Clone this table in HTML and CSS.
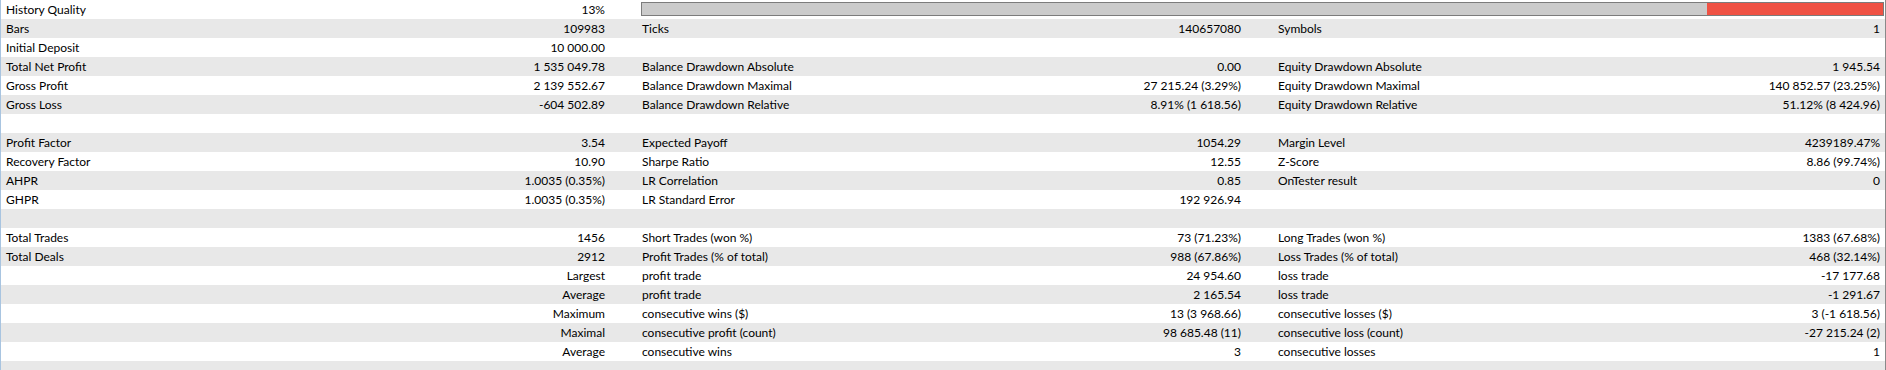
FILE: index.html
```html
<!DOCTYPE html>
<html>
<head>
<meta charset="utf-8">
<link rel="stylesheet" href="styles.css">
</head>
<body>
<div class="report">
  <div class="row">
    <div class="grp"><span class="lbl">History Quality</span><span class="val">13%</span></div>
    <div class="bar-cell"><div class="bar"><div class="bar-rest"></div><div class="bar-fill" style="width:14.2%"></div></div></div>
  </div>
  <div class="row">
    <div class="grp"><span class="lbl">Bars</span><span class="val">109983</span></div>
    <div class="grp"><span class="lbl">Ticks</span><span class="val">140657080</span></div>
    <div class="grp"><span class="lbl">Symbols</span><span class="val">1</span></div>
  </div>
  <div class="row">
    <div class="grp"><span class="lbl">Initial Deposit</span><span class="val">10 000.00</span></div>
    <div class="grp"></div>
    <div class="grp"></div>
  </div>
  <div class="row">
    <div class="grp"><span class="lbl">Total Net Profit</span><span class="val">1 535 049.78</span></div>
    <div class="grp"><span class="lbl">Balance Drawdown Absolute</span><span class="val">0.00</span></div>
    <div class="grp"><span class="lbl">Equity Drawdown Absolute</span><span class="val">1 945.54</span></div>
  </div>
  <div class="row">
    <div class="grp"><span class="lbl">Gross Profit</span><span class="val">2 139 552.67</span></div>
    <div class="grp"><span class="lbl">Balance Drawdown Maximal</span><span class="val">27 215.24 (3.29%)</span></div>
    <div class="grp"><span class="lbl">Equity Drawdown Maximal</span><span class="val">140 852.57 (23.25%)</span></div>
  </div>
  <div class="row">
    <div class="grp"><span class="lbl">Gross Loss</span><span class="val">-604 502.89</span></div>
    <div class="grp"><span class="lbl">Balance Drawdown Relative</span><span class="val">8.91% (1 618.56)</span></div>
    <div class="grp"><span class="lbl">Equity Drawdown Relative</span><span class="val">51.12% (8 424.96)</span></div>
  </div>
  <div class="row"></div>
  <div class="row">
    <div class="grp"><span class="lbl">Profit Factor</span><span class="val">3.54</span></div>
    <div class="grp"><span class="lbl">Expected Payoff</span><span class="val">1054.29</span></div>
    <div class="grp"><span class="lbl">Margin Level</span><span class="val">4239189.47%</span></div>
  </div>
  <div class="row">
    <div class="grp"><span class="lbl">Recovery Factor</span><span class="val">10.90</span></div>
    <div class="grp"><span class="lbl">Sharpe Ratio</span><span class="val">12.55</span></div>
    <div class="grp"><span class="lbl">Z-Score</span><span class="val">8.86 (99.74%)</span></div>
  </div>
  <div class="row">
    <div class="grp"><span class="lbl">AHPR</span><span class="val">1.0035 (0.35%)</span></div>
    <div class="grp"><span class="lbl">LR Correlation</span><span class="val">0.85</span></div>
    <div class="grp"><span class="lbl">OnTester result</span><span class="val">0</span></div>
  </div>
  <div class="row">
    <div class="grp"><span class="lbl">GHPR</span><span class="val">1.0035 (0.35%)</span></div>
    <div class="grp"><span class="lbl">LR Standard Error</span><span class="val">192 926.94</span></div>
    <div class="grp"></div>
  </div>
  <div class="row"></div>
  <div class="row">
    <div class="grp"><span class="lbl">Total Trades</span><span class="val">1456</span></div>
    <div class="grp"><span class="lbl">Short Trades (won %)</span><span class="val">73 (71.23%)</span></div>
    <div class="grp"><span class="lbl">Long Trades (won %)</span><span class="val">1383 (67.68%)</span></div>
  </div>
  <div class="row">
    <div class="grp"><span class="lbl">Total Deals</span><span class="val">2912</span></div>
    <div class="grp"><span class="lbl">Profit Trades (% of total)</span><span class="val">988 (67.86%)</span></div>
    <div class="grp"><span class="lbl">Loss Trades (% of total)</span><span class="val">468 (32.14%)</span></div>
  </div>
  <div class="row">
    <div class="grp"><span class="lbl"></span><span class="val">Largest</span></div>
    <div class="grp"><span class="lbl">profit trade</span><span class="val">24 954.60</span></div>
    <div class="grp"><span class="lbl">loss trade</span><span class="val">-17 177.68</span></div>
  </div>
  <div class="row">
    <div class="grp"><span class="lbl"></span><span class="val">Average</span></div>
    <div class="grp"><span class="lbl">profit trade</span><span class="val">2 165.54</span></div>
    <div class="grp"><span class="lbl">loss trade</span><span class="val">-1 291.67</span></div>
  </div>
  <div class="row">
    <div class="grp"><span class="lbl"></span><span class="val">Maximum</span></div>
    <div class="grp"><span class="lbl">consecutive wins ($)</span><span class="val">13 (3 968.66)</span></div>
    <div class="grp"><span class="lbl">consecutive losses ($)</span><span class="val">3 (-1 618.56)</span></div>
  </div>
  <div class="row">
    <div class="grp"><span class="lbl"></span><span class="val">Maximal</span></div>
    <div class="grp"><span class="lbl">consecutive profit (count)</span><span class="val">98 685.48 (11)</span></div>
    <div class="grp"><span class="lbl">consecutive loss (count)</span><span class="val">-27 215.24 (2)</span></div>
  </div>
  <div class="row">
    <div class="grp"><span class="lbl"></span><span class="val">Average</span></div>
    <div class="grp"><span class="lbl">consecutive wins</span><span class="val">3</span></div>
    <div class="grp"><span class="lbl">consecutive losses</span><span class="val">1</span></div>
  </div>
  <div class="row"></div>
</div>
</body>
</html>
```
FILE: styles.css
```css
html, body {
  margin: 0;
  padding: 0;
  background: #ffffff;
}
body {
  font-family: Lato, "Liberation Sans", sans-serif;
  font-size: 12px;
  color: #000000;
  overflow: hidden;
}
.report {
  width: 1886px;
  height: 370px;
  box-sizing: border-box;
  border-left: 1px solid #a8c4e0;
  border-right: 1px solid #8a8a8a;
  overflow: hidden;
}
.row {
  height: 19px;
  display: grid;
  grid-template-columns: 604px 604px 607px;
  column-gap: 32px;
  align-items: center;
}
.row:nth-child(even) {
  background: #e8e8e8;
}
.grp {
  display: flex;
  align-items: center;
  height: 19px;
  white-space: nowrap;
}
.lbl {
  padding-left: 5px;
}
.val {
  margin-left: auto;
}
.bar-cell {
  grid-column: 2 / 4;
  height: 19px;
  display: flex;
  align-items: center;
  padding-left: 4px;
  margin-right: -4px;
}
.bar {
  flex: 1;
  height: 14px;
  box-sizing: border-box;
  border: 1px solid #7c7c7c;
  display: flex;
  margin-top: -1px;
}
.bar-rest {
  flex: 1;
  background: #cbcbcb;
}
.bar-fill {
  background: #ef5244;
}
```
